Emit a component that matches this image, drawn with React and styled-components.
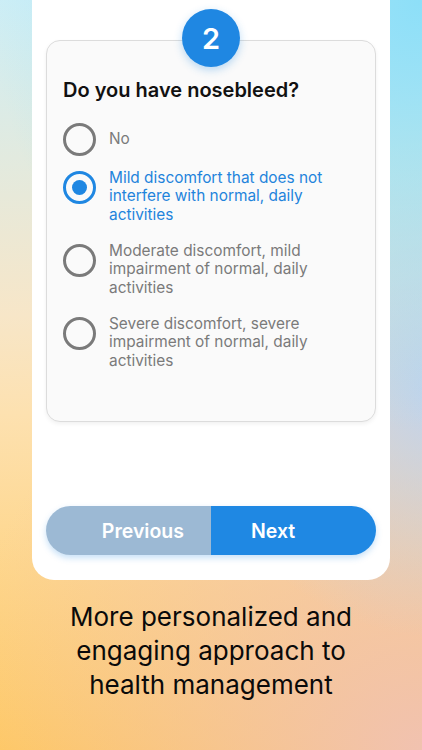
import React from "react";
import styled, { createGlobalStyle } from "styled-components";

const options = [
  "No",
  "Mild discomfort that does not interfere with normal, daily activities",
  "Moderate discomfort, mild impairment of normal, daily activities",
  "Severe discomfort, severe impairment of normal, daily activities",
];

export default function App() {
  const selected = 1;
  return (
    <>
      <GlobalStyle />
      <Page>
        <Phone>
          <QuestionCard>
            <Badge>2</Badge>
            <Question>Do you have nosebleed?</Question>
            <OptionList>
              {options.map((text, index) => (
                <Option key={index}>
                  <Radio $active={index === selected} />
                  <OptionText $active={index === selected}>{text}</OptionText>
                </Option>
              ))}
            </OptionList>
          </QuestionCard>
          <ButtonBar>
            <NavButton $primary={false}>Previous</NavButton>
            <NavButton $primary>Next</NavButton>
          </ButtonBar>
        </Phone>
        <Caption>
          More personalized and
          <br />
          engaging approach to
          <br />
          health management
        </Caption>
      </Page>
    </>
  );
}

const GlobalStyle = createGlobalStyle`
  * { box-sizing: border-box; }
  html, body {
    margin: 0;
    padding: 0;
    font-family: Inter, "Noto Sans", sans-serif;
  }
`;

const Page = styled.div`
  width: 422px;
  height: 750px;
  overflow: hidden;
  display: flex;
  flex-direction: column;
  align-items: center;
  background:
    radial-gradient(circle at 100% 0%, #8ddff8 0%, rgba(141, 223, 248, 0) 50%),
    radial-gradient(circle at 105% 52%, #bfd3ee 0%, rgba(191, 211, 238, 0) 42%),
    radial-gradient(circle at 100% 100%, #f1c2b0 0%, rgba(241, 194, 176, 0) 55%),
    linear-gradient(to bottom, #cdeef6 0%, #f7e6c8 42%, #fde1b0 55%, #ffc960 100%);
`;

const Phone = styled.div`
  width: 358px;
  height: 580px;
  background: #ffffff;
  border-radius: 0 0 22px 22px;
  padding: 40px 14px 25px;
  display: flex;
  flex-direction: column;
`;

const QuestionCard = styled.div`
  position: relative;
  height: 382px;
  background: #fafafa;
  border: 1px solid #dcdcdc;
  border-radius: 14px;
  box-shadow: 0 2px 4px rgba(0, 0, 0, 0.06);
  padding: 37px 16px 0;
`;

const Badge = styled.div`
  position: absolute;
  top: -32px;
  left: 50%;
  transform: translateX(-50%);
  width: 58px;
  height: 58px;
  border-radius: 50%;
  background: #1f87e2;
  box-shadow: 0 3px 8px rgba(31, 135, 226, 0.3);
  color: #ffffff;
  font-size: 29px;
  font-weight: 600;
  display: flex;
  align-items: center;
  justify-content: center;
`;

const Question = styled.div`
  font-size: 20px;
  line-height: 24px;
  font-weight: 600;
  color: #111111;
`;

const OptionList = styled.div`
  margin-top: 19px;
  display: flex;
  flex-direction: column;
  gap: 17.5px;
`;

const Option = styled.div`
  display: flex;
  align-items: flex-start;
  gap: 13px;
  &:first-child {
    margin-bottom: -7px;
  }
`;

const Radio = styled.div`
  flex: none;
  width: 33px;
  height: 33px;
  margin-top: 2px;
  border-radius: 50%;
  border: 3px solid ${(p) => (p.$active ? "#1f87e2" : "#7a7a7a")};
  display: flex;
  align-items: center;
  justify-content: center;
  &::after {
    content: "";
    display: ${(p) => (p.$active ? "block" : "none")};
    width: 15px;
    height: 15px;
    border-radius: 50%;
    background: #1f87e2;
  }
`;

const OptionText = styled.div`
  min-height: 37px;
  display: flex;
  align-items: center;
  font-size: 15.4px;
  line-height: 18.5px;
  color: ${(p) => (p.$active ? "#1f84dc" : "#7a7a7a")};
  padding-right: 16px;
`;

const ButtonBar = styled.div`
  margin-top: auto;
  display: flex;
  height: 49px;
  border-radius: 25px;
  overflow: hidden;
  box-shadow: 0 3px 6px rgba(31, 135, 226, 0.25);
`;

const NavButton = styled.div`
  flex: none;
  width: 50%;
  display: flex;
  align-items: center;
  justify-content: ${(p) => (p.$primary ? "flex-start" : "flex-end")};
  padding: ${(p) => (p.$primary ? "0 0 0 40px" : "0 27px 0 0")};
  background: ${(p) => (p.$primary ? "#1f88e3" : "#9cb9d4")};
  color: #ffffff;
  font-size: 19.5px;
  font-weight: 600;
`;

const Caption = styled.div`
  margin-top: 20px;
  text-align: center;
  font-size: 26px;
  line-height: 34px;
  font-weight: 400;
  color: #0a0a0a;
`;
